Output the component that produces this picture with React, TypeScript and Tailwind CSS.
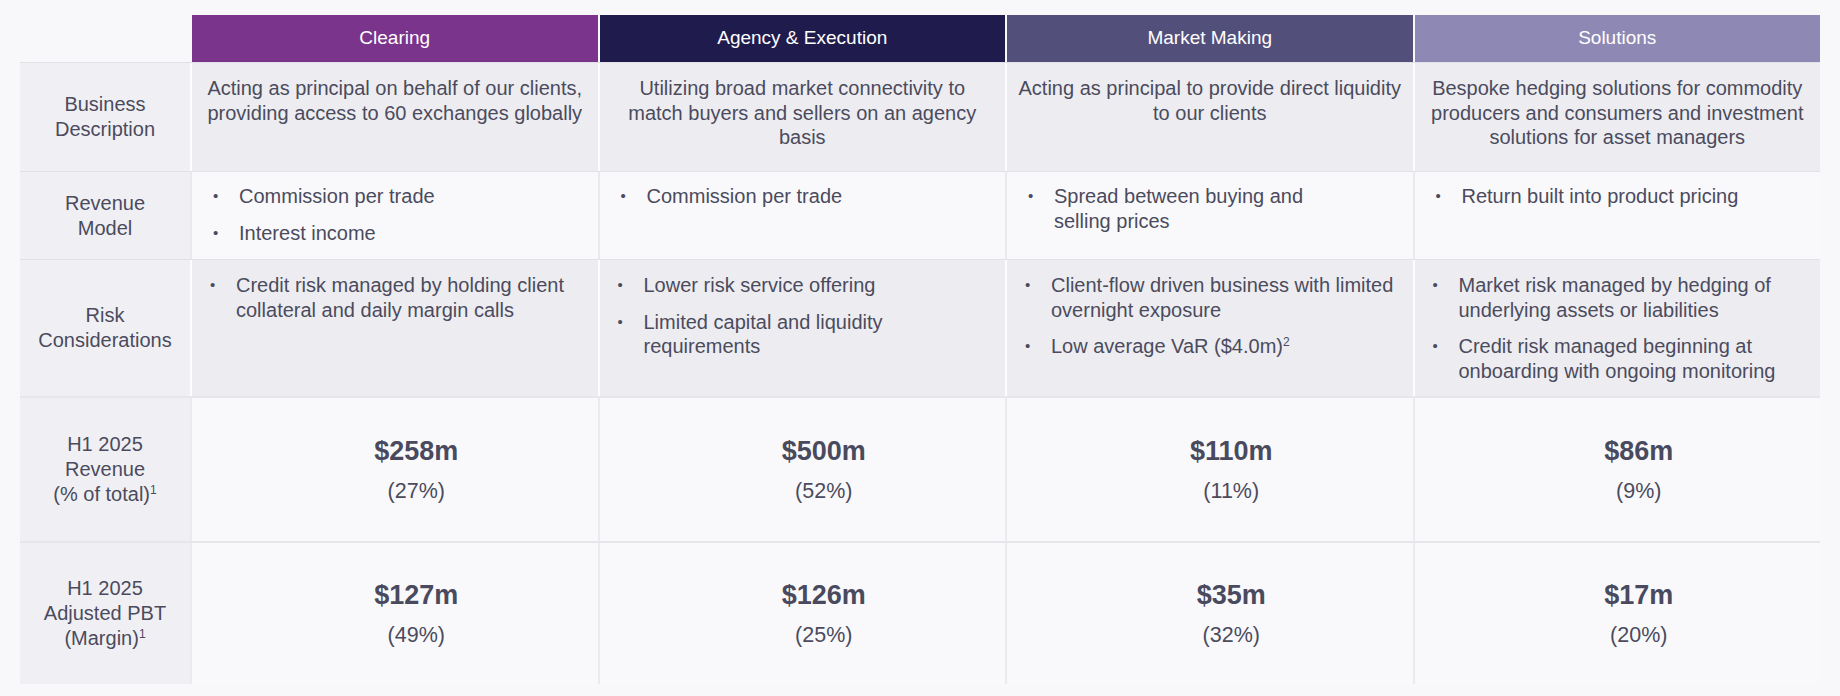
import React from "react";

type Col = {
  title: string;
  head: string;
  desc: string[];
  revenue: string[][];
  risk: React.ReactNode[][];
  rev: string;
  revPct: string;
  pbt: string;
  pbtPct: string;
};

const COLS: Col[] = [
  {
    title: "Clearing",
    head: "bg-[#7a348c]",
    desc: ["Acting as principal on behalf of our clients,", "providing access to 60 exchanges globally"],
    revenue: [["Commission per trade"], ["Interest income"]],
    risk: [["Credit risk managed by holding client", "collateral and daily margin calls"]],
    rev: "$258m",
    revPct: "(27%)",
    pbt: "$127m",
    pbtPct: "(49%)",
  },
  {
    title: "Agency & Execution",
    head: "bg-[#1f1c4d]",
    desc: ["Utilizing broad market connectivity to", "match buyers and sellers on an agency", "basis"],
    revenue: [["Commission per trade"]],
    risk: [["Lower risk service offering"], ["Limited capital and liquidity", "requirements"]],
    rev: "$500m",
    revPct: "(52%)",
    pbt: "$126m",
    pbtPct: "(25%)",
  },
  {
    title: "Market Making",
    head: "bg-[#524f7b]",
    desc: ["Acting as principal to provide direct liquidity", "to our clients"],
    revenue: [["Spread between buying and", "selling prices"]],
    risk: [
      ["Client-flow driven business with limited", "overnight exposure"],
      [
        <>
          Low average VaR ($4.0m)<sup className="relative -top-[7px] align-baseline text-[12px]">2</sup>
        </>,
      ],
    ],
    rev: "$110m",
    revPct: "(11%)",
    pbt: "$35m",
    pbtPct: "(32%)",
  },
  {
    title: "Solutions",
    head: "bg-[#8e88b4]",
    desc: ["Bespoke hedging solutions for commodity", "producers and consumers and investment", "solutions for asset managers"],
    revenue: [["Return built into product pricing"]],
    risk: [
      ["Market risk managed by hedging of", "underlying assets or liabilities"],
      ["Credit risk managed beginning at", "onboarding with ongoing monitoring"],
    ],
    rev: "$86m",
    revPct: "(9%)",
    pbt: "$17m",
    pbtPct: "(20%)",
  },
];

function Sup({ n }: { n: string }) {
  return <sup className="relative -top-[7px] align-baseline text-[12px]">{n}</sup>;
}

function Label({ children }: { children: React.ReactNode }) {
  return (
    <div className="flex items-center justify-center bg-[#f0f0f4] text-center leading-[25px]">
      <div>{children}</div>
    </div>
  );
}

function Bullets({ items, pad }: { items: React.ReactNode[][]; pad: string }) {
  return (
    <div className={`flex flex-col gap-[12px] ${pad}`}>
      {items.map((lines, i) => (
        <div key={i} className="flex">
          <span className="w-[26px] shrink-0 text-[15px] leading-[24px]">•</span>
          <div className="leading-[24.5px] whitespace-nowrap">
            {lines.map((l, j) => (
              <div key={j}>{l}</div>
            ))}
          </div>
        </div>
      ))}
    </div>
  );
}

function Value({ big, pct }: { big: string; pct: string }) {
  return (
    <div className="flex flex-col items-center justify-center gap-[11px] bg-[#f9f9fb] pl-[43px]">
      <div className="text-[27px] font-bold leading-[32px] text-[#4a4a5e]">{big}</div>
      <div className="text-[21.5px] leading-[26px]">{pct}</div>
    </div>
  );
}

export default function App() {
  const grid = "grid grid-cols-[170px_repeat(4,1fr)] gap-x-[2px]";
  return (
    <div
      className="h-screen w-full bg-[#f8f8fa] px-[20px] pt-[15px] text-[20px] text-[#4b4b5d]"
      style={{ fontFamily: '"Liberation Sans", Arial, sans-serif' }}
    >
      {/* header */}
      <div className={`${grid} h-[47px]`}>
        <div />
        {COLS.map(c => (
          <div key={c.title} className={`${c.head} flex items-center justify-center text-[19px] text-white`}>
            {c.title}
          </div>
        ))}
      </div>

      {/* business description */}
      <div className={`${grid} h-[109px] border-t border-[#e1e1e7] bg-[#fdfdfe]`}>
        <Label>
          Business
          <br />
          Description
        </Label>
        {COLS.map(c => (
          <div key={c.title} className="bg-[#ededf1] pt-[13px] text-center leading-[24.5px] whitespace-nowrap">
            {c.desc.map((l, i) => (
              <div key={i}>{l}</div>
            ))}
          </div>
        ))}
      </div>

      {/* revenue model */}
      <div className={`${grid} h-[88px] border-t border-[#e1e1e7] bg-[#e9e9ee]`}>
        <Label>
          Revenue
          <br />
          Model
        </Label>
        {COLS.map(c => (
          <div key={c.title} className="bg-[#f9f9fb] pt-[12px]">
            <Bullets items={c.revenue} pad="pl-[21px]" />
          </div>
        ))}
      </div>

      {/* risk */}
      <div className={`${grid} h-[137px] border-t border-[#e1e1e7] bg-[#fdfdfe]`}>
        <Label>
          Risk
          <br />
          Considerations
        </Label>
        {COLS.map(c => (
          <div key={c.title} className="bg-[#ededf1] pt-[13px]">
            <Bullets items={c.risk} pad="pl-[18px]" />
          </div>
        ))}
      </div>

      {/* revenue */}
      <div className={`${grid} h-[145px] border-t-2 border-[#e6e6eb] bg-[#ebebef]`}>
        <Label>
          H1 2025
          <br />
          Revenue
          <br />
          (% of total)
          <Sup n="1" />
        </Label>
        {COLS.map(c => (
          <Value key={c.title} big={c.rev} pct={c.revPct} />
        ))}
      </div>

      {/* pbt */}
      <div className={`${grid} h-[143px] border-t-2 border-[#e6e6eb] bg-[#ebebef]`}>
        <Label>
          H1 2025
          <br />
          Adjusted PBT
          <br />
          (Margin)
          <Sup n="1" />
        </Label>
        {COLS.map(c => (
          <Value key={c.title} big={c.pbt} pct={c.pbtPct} />
        ))}
      </div>
    </div>
  );
}
